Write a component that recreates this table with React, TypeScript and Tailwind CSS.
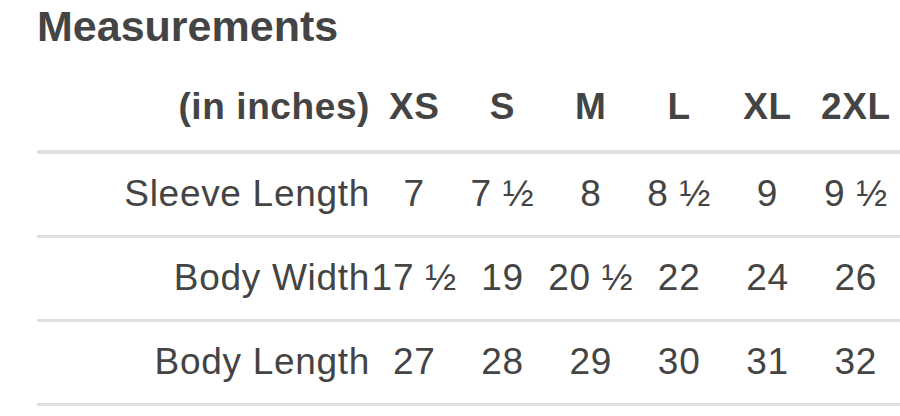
const sizes = ["XS", "S", "M", "L", "XL", "2XL"];

const rows = [
  { label: "Sleeve Length", values: ["7", "7 ½", "8", "8 ½", "9", "9 ½"] },
  { label: "Body Width", values: ["17 ½", "19", "20 ½", "22", "24", "26"] },
  { label: "Body Length", values: ["27", "28", "29", "30", "31", "32"] },
];

export default function App() {
  return (
    <div
      className="w-[900px] h-[416px] bg-white overflow-hidden text-[#444444]"
      style={{ fontFamily: '"Liberation Sans", Arial, sans-serif' }}
    >
      <div className="pl-[37px]">
        <h2 className="pt-[2px] text-[43px] leading-[48px] font-bold">Measurements</h2>

        <div className="w-[863px]">
          <div className="flex items-end h-[104px] pb-[25px] border-b-4 border-[#e0e0e0] text-[37px] leading-none font-bold tracking-[0.6px]">
            <div className="w-[333px] shrink-0 text-right whitespace-nowrap">(in inches)</div>
            {sizes.map((s) => (
              <div key={s} className="flex-1 text-center whitespace-nowrap">
                {s}
              </div>
            ))}
          </div>

          {rows.map((row) => (
            <div
              key={row.label}
              className="flex items-center h-[84px] pb-[3px] border-b-[3px] border-[#e0e0e0] text-[37px] leading-none tracking-[0.7px]"
            >
              <div className="w-[333px] shrink-0 text-right whitespace-nowrap">{row.label}</div>
              {row.values.map((v, i) => (
                <div key={i} className="flex-1 text-center whitespace-nowrap">
                  {v}
                </div>
              ))}
            </div>
          ))}
        </div>
      </div>
    </div>
  );
}
